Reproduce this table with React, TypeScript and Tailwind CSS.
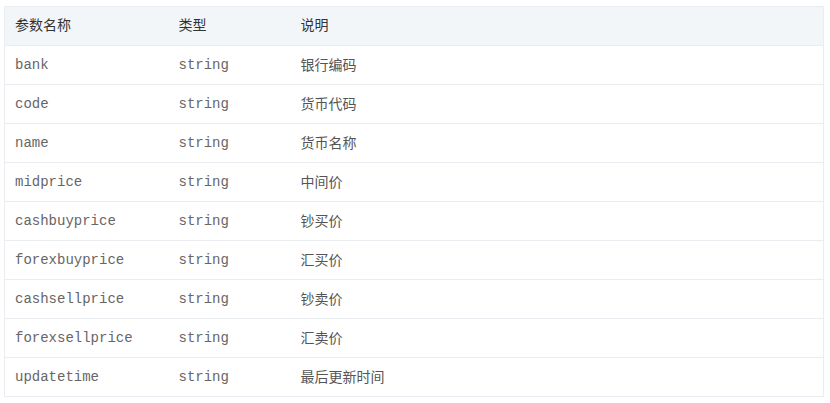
const rows: [string, string, string][] = [
  ["bank", "string", "银行编码"],
  ["code", "string", "货币代码"],
  ["name", "string", "货币名称"],
  ["midprice", "string", "中间价"],
  ["cashbuyprice", "string", "钞买价"],
  ["forexbuyprice", "string", "汇买价"],
  ["cashsellprice", "string", "钞卖价"],
  ["forexsellprice", "string", "汇卖价"],
  ["updatetime", "string", "最后更新时间"],
];

const sans = "font-['Microsoft_YaHei','Noto_Sans_CJK_SC',sans-serif]";
const mono = "font-['Liberation_Mono','Noto_Sans_CJK_SC',monospace]";

export default function App() {
  return (
    <div className="bg-white w-[830px] h-[403px] pl-[4px] pt-[6px]">
      <table className="w-[820px] border-collapse border border-[#e9edf1] text-[14px] table-fixed">
        <colgroup>
          <col className="w-[164px]" />
          <col className="w-[122px]" />
          <col />
        </colgroup>
        <thead>
          <tr className={`bg-[#f3f6f9] h-[39px] text-[#333] ${sans}`}>
            <th className="text-left font-normal pl-[10px] pb-[3px]">参数名称</th>
            <th className="text-left font-normal pl-[10px] pb-[3px]">类型</th>
            <th className="text-left font-normal pl-[10px] pb-[3px]">说明</th>
          </tr>
        </thead>
        <tbody>
          {rows.map(([name, type, desc]) => (
            <tr key={name} className="h-[39px] border-t border-[#e9edf1]">
              <td className={`pl-[10px] pt-[1px] text-[#666] ${mono}`}>{name}</td>
              <td className={`pl-[10px] pt-[1px] text-[#666] ${mono}`}>{type}</td>
              <td className={`pl-[10px] pb-[2px] text-[#555] ${sans}`}>{desc}</td>
            </tr>
          ))}
        </tbody>
      </table>
    </div>
  );
}
